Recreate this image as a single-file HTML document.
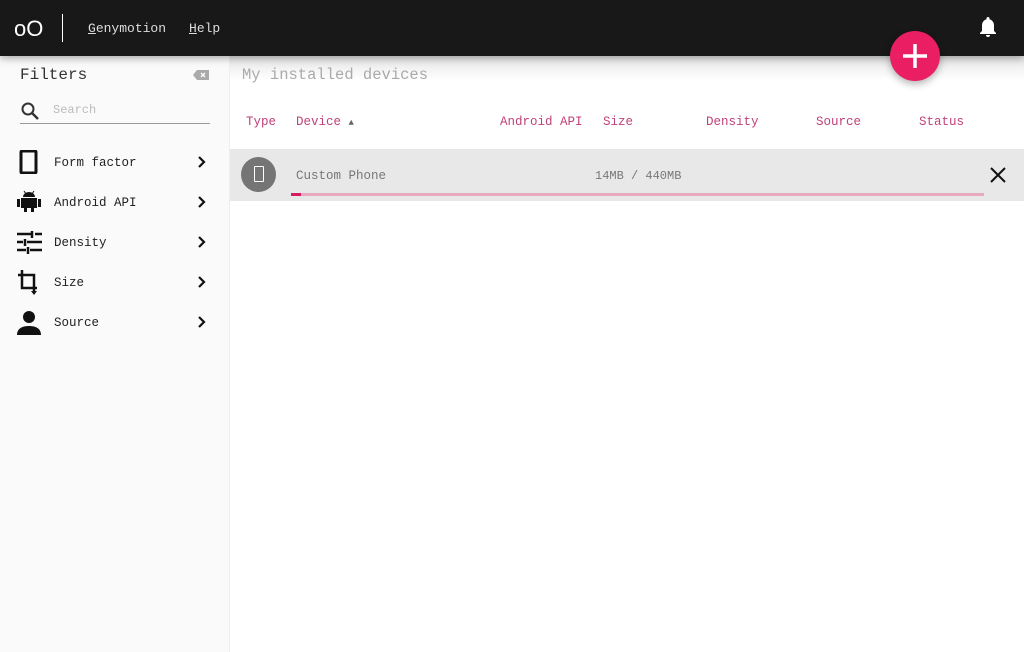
<!DOCTYPE html>
<html><head><meta charset="utf-8"><style>
*{margin:0;padding:0;box-sizing:border-box}
body{width:1024px;height:652px;overflow:hidden;background:#fff;font-family:"Liberation Mono","Noto Sans CJK SC",monospace;position:relative}
.top{position:absolute;left:0;top:0;width:1024px;height:56px;background:#181818;color:#fff;box-shadow:0 2px 8px rgba(0,0,0,.35);z-index:2}
.logo{position:absolute;left:14px;top:16px;font-family:"Liberation Sans",sans-serif;font-size:22px;font-weight:300}
.sep{position:absolute;left:62px;top:14px;width:1px;height:28px;background:#fff}
.nav{position:absolute;top:21px;font-size:13px;color:#ddd}
.side{position:absolute;left:0;top:56px;width:230px;height:596px;background:#fafafa;border-right:1px solid #eee}
.ft{position:absolute;left:20px;top:66px;font-size:16px;color:#333}
.search{position:absolute;left:20px;top:98px;width:190px;height:26px;border-bottom:1px solid #999}
.search span{position:absolute;left:33px;top:5px;font-size:12px;color:#bbb}
.item{position:absolute;left:0;width:230px;height:40px}
.item svg.ic{position:absolute;left:17px;top:8px}
.item .t{position:absolute;left:54px;top:14px;font-size:12.5px;color:#222}
.item .ch{position:absolute;left:196px;top:13px}
.hd{position:absolute;left:242px;top:66px;font-size:15.5px;color:#aaa}
.th{position:absolute;top:115px;font-size:12.5px;color:#c0427a}
.row{position:absolute;left:230px;top:149px;width:794px;height:52px;background:#e8e8e8}
.fab{position:absolute;left:890px;top:31px;width:50px;height:50px;border-radius:50%;background:#e91e63;box-shadow:0 3px 8px rgba(0,0,0,.3);z-index:3}
.grad{position:absolute;left:230px;top:56px;width:794px;height:40px;background:linear-gradient(#e6e6e6,#fff 60%)}
</style></head><body>
<div class="top">
 <div class="logo">oO</div><div class="sep"></div>
 <div class="nav" style="left:88px"><u>G</u>enymotion</div>
 <div class="nav" style="left:189px"><u>H</u>elp</div>
 <svg style="position:absolute;left:978px;top:16px" width="20" height="22" viewBox="0 0 20 22"><path d="M10 1a1.5 1.5 0 0 1 1.5 1.5v.8A6 6 0 0 1 16 9v6l2 2v1H2v-1l2-2V9a6 6 0 0 1 4.5-5.7v-.8A1.5 1.5 0 0 1 10 1zM8 19h4a2 2 0 0 1-4 0z" fill="#fff"/></svg>
</div>
<div class="fab"><svg width="50" height="50"><path d="M25 13v24M13 25h24" stroke="#fff" stroke-width="3.5"/></svg></div>
<div class="side"></div>
<div class="ft">Filters</div>
<svg style="position:absolute;left:193px;top:70px" width="16" height="10"><path d="M4 0h12v10H4L0 5z" fill="#aaa"/><path d="M8 3l4 4M12 3l-4 4" stroke="#fff" stroke-width="1.3"/></svg>
<div class="search"><svg style="position:absolute;left:0;top:3px" width="20" height="20"><circle cx="8" cy="8" r="5.5" stroke="#333" stroke-width="2" fill="none"/><path d="M12 12l6 6" stroke="#333" stroke-width="2.5"/></svg><span>Search</span></div>

<div class="item" style="top:142px"><svg class="ic" width="24" height="24"><rect x="4" y="1" width="15" height="22" rx="1" fill="none" stroke="#111" stroke-width="3"/></svg><div class="t">Form factor</div><svg class="ch" width="12" height="14"><path d="M3 2l5 5-5 5" stroke="#111" stroke-width="2.2" fill="none"/></svg></div>
<div class="item" style="top:182px"><svg class="ic" width="24" height="24"><path d="M6 7a6 5 0 0 1 12 0z M4 8h16v10H4z M7 17h3v5H7z M14 17h3v5h-3z M0 9h3v8H0z M21 9h3v8h-3z" fill="#111"/><path d="M7 1l2 3M17 1l-2 3" stroke="#111" stroke-width="1"/></svg><div class="t">Android API</div><svg class="ch" width="12" height="14"><path d="M3 2l5 5-5 5" stroke="#111" stroke-width="2.2" fill="none"/></svg></div>
<div class="item" style="top:222px"><svg class="ic" width="26" height="24"><path d="M0 4h14M18 4h7M0 12h6M10 12h15M0 20h9M13 20h12M15 1v7M8 9v7M11 17v7" stroke="#111" stroke-width="2.5"/></svg><div class="t">Density</div><svg class="ch" width="12" height="14"><path d="M3 2l5 5-5 5" stroke="#111" stroke-width="2.2" fill="none"/></svg></div>
<div class="item" style="top:262px"><svg class="ic" width="24" height="26"><path d="M5 0v18h15M1 5h16v18" stroke="#111" stroke-width="2.5" fill="none"/><path d="M14 21l3 4 3-4z" fill="#111"/></svg><div class="t">Size</div><svg class="ch" width="12" height="14"><path d="M3 2l5 5-5 5" stroke="#111" stroke-width="2.2" fill="none"/></svg></div>
<div class="item" style="top:302px"><svg class="ic" width="26" height="26"><circle cx="12" cy="7" r="6" fill="#111"/><path d="M0 25c0-7 6-9 12-9s12 2 12 9z" fill="#111"/></svg><div class="t">Source</div><svg class="ch" width="12" height="14"><path d="M3 2l5 5-5 5" stroke="#111" stroke-width="2.2" fill="none"/></svg></div>

<div class="grad"></div>
<div class="hd">My installed devices</div>
<div class="th" style="left:246px">Type</div>
<div class="th" style="left:296px">Device <span style="font-size:9px;color:#666">▲</span></div>
<div class="th" style="left:500px">Android API</div>
<div class="th" style="left:603px">Size</div>
<div class="th" style="left:706px">Density</div>
<div class="th" style="left:816px">Source</div>
<div class="th" style="left:919px">Status</div>

<div class="row">
 <div style="position:absolute;left:11px;top:8px;width:35px;height:35px;border-radius:50%;background:#757575"></div>
 <div style="position:absolute;left:24px;top:17px;width:10px;height:16px;border:1.5px solid #fff;border-radius:1px"></div>
 <div style="position:absolute;left:66px;top:20px;font-size:12.5px;color:#777">Custom Phone</div>
 <div style="position:absolute;left:365px;top:20px;font-size:12px;color:#777">14MB / 440MB</div>
 <div style="position:absolute;left:61px;top:44px;width:693px;height:3px;background:#e8a9bf"></div>
 <div style="position:absolute;left:61px;top:44px;width:10px;height:3px;background:#d81b60"></div>
 <svg style="position:absolute;left:760px;top:18px" width="16" height="16"><path d="M1 1l14 14M15 1L1 15" stroke="#111" stroke-width="2"/></svg>
</div>
</body></html>
